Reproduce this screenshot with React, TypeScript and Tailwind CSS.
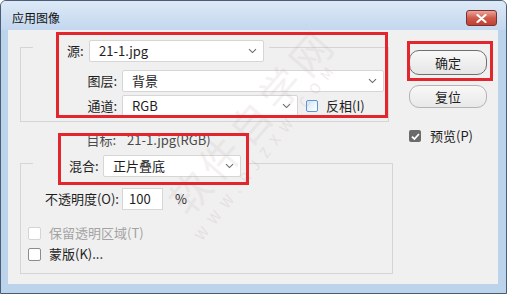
const font = "font-['Microsoft_YaHei','Noto_Sans_CJK_SC',sans-serif]";

function Chevron() {
  return (
    <svg width="9" height="6" viewBox="0 0 9 6" className="shrink-0">
      <path d="M1 1.2 L4.5 4.6 L8 1.2" fill="none" stroke="#6a6a6a" strokeWidth="1.1" />
    </svg>
  );
}

function Select({ value, w }: { value: string; w: string }) {
  return (
    <div
      className={`${w} h-[22px] flex items-center justify-between bg-white border border-[#d6d6d6] rounded-[2px] pl-[9px] pr-[6px] text-[13px] text-[#1e1e1e]`}
    >
      <span>{value}</span>
      <Chevron />
    </div>
  );
}

function Box({ disabled }: { disabled?: boolean }) {
  return (
    <span
      className={`w-[13px] h-[13px] shrink-0 rounded-[2px] border bg-white ${
        disabled ? "border-[#d4d4d4]" : "border-[#8c8c8c]"
      }`}
    />
  );
}

export default function App() {
  return (
    <div
      className={`relative w-[507px] h-[294px] overflow-hidden flex flex-col bg-[#bcd3ec] border border-[#4a5d74] rounded-t-[6px] ${font}`}
    >
      {/* title bar */}
      <div className="h-[29px] shrink-0 flex items-center justify-between pt-[5px] pl-[11px] pr-[9px] bg-linear-to-b from-[#dde9f6] to-[#c3d7ee]">
        <span className="text-[12px] leading-[14px] text-[#111]">应用图像</span>
        <button className="w-[31px] h-[16px] flex items-center justify-center rounded-[3px] border border-[#7a3030] bg-linear-to-b from-[#e9a59a] via-[#cf5a4d] to-[#c0402f]">
          <svg width="11" height="9" viewBox="0 0 11 9">
            <path d="M1.5 1 L9.5 8 M9.5 1 L1.5 8" stroke="#fff" strokeWidth="2.2" strokeLinecap="round" />
          </svg>
        </button>
      </div>

      {/* client */}
      <div className="flex-1 ml-[7px] mr-[8px] mb-[9px] bg-[#f0f0f0] flex text-[13px] leading-[18px] text-[#1e1e1e]">
        <div className="pl-[12px] pt-[2px]">
          <fieldset className="w-[369px] border border-[#d5d5d5] pb-[4px]">
            <legend className="ml-[12px] pl-[34px] pr-[5px] pt-[8px]">
              <div className="flex items-center">
                <span className="w-[18px]">源:</span>
                <span className="ml-[4px]">
                  <Select value="21-1.jpg" w="w-[175px]" />
                </span>
              </div>
            </legend>
            <div className="pt-[8px] flex flex-col gap-[3px]">
              <div className="flex items-center">
                <span className="w-[96px] text-right">图层:</span>
                <span className="ml-[5px]">
                  <Select value="背景" w="w-[262px]" />
                </span>
              </div>
              <div className="flex items-center">
                <span className="w-[96px] text-right">通道:</span>
                <span className="ml-[5px]">
                  <Select value="RGB" w="w-[176px]" />
                </span>
                <span className="ml-[8px] w-[12px] h-[12px] rounded-[2px] border border-[#5f94d4] bg-linear-to-br from-[#d6e6f8] to-white" />
                <span className="ml-[8px]">反相(I)</span>
              </div>
            </div>
          </fieldset>

          <div className="mt-[9px] h-[18px] flex items-center text-[#4a4a4a]">
            <span className="w-[96px] text-right">目标:</span>
            <span className="ml-[11px]">21-1.jpg(RGB)</span>
          </div>

          <fieldset className="w-[373px] border border-[#d5d5d5] pb-[10px]">
            <legend className="ml-[12px] pl-[36px] pr-[5px] pt-[6px]">
              <div className="flex items-center">
                <span className="w-[31px]">混合:</span>
                <span className="ml-[3px]">
                  <Select value="正片叠底" w="w-[138px]" />
                </span>
              </div>
            </legend>
            <div className="pt-[11px] flex items-center">
              <span className="w-[98px] text-right">不透明度(O):</span>
              <div className="ml-[3px] w-[41px] h-[22px] bg-white border border-[#d6d6d6] pl-[6px] flex items-center">
                100
              </div>
              <span className="ml-[12px]">%</span>
            </div>
            <div className="mt-[14px] h-[18px] flex items-center pl-[7px] text-[#a3a3a3]">
              <Box disabled />
              <span className="ml-[8px]">保留透明区域(T)</span>
            </div>
            <div className="mt-[3px] h-[18px] flex items-center pl-[7px]">
              <Box />
              <span className="ml-[8px]">蒙版(K)...</span>
            </div>
          </fieldset>
        </div>

        {/* buttons */}
        <div className="ml-[16px] pt-[20px] flex flex-col">
          <button className="w-[78px] h-[25px] rounded-[10px] border border-[#6f6f6f] bg-linear-to-b from-[#f8f8f8] to-[#e6e6e6] text-[13px]">
            确定
          </button>
          <button className="mt-[10px] w-[78px] h-[23px] rounded-[10px] border border-[#b4b4b4] bg-linear-to-b from-[#f8f8f8] to-[#e8e8e8] text-[13px]">
            复位
          </button>
          <div className="mt-[19px] h-[18px] flex items-center">
            <span className="w-[12px] h-[12px] rounded-[2px] bg-[#6b6b6b] flex items-center justify-center">
              <svg width="9" height="7" viewBox="0 0 9 7">
                <path d="M1 3.6 L3.4 6 L8 1" fill="none" stroke="#fff" strokeWidth="1.8" />
              </svg>
            </span>
            <span className="ml-[9px]">预览(P)</span>
          </div>
        </div>
      </div>

      {/* watermark */}
      <div className="absolute left-[137px] top-[99px] w-[226px] h-[40px] flex items-center justify-center -rotate-[49deg] text-[40px] leading-[40px] tracking-[6px] text-[#b8a4a4] opacity-[0.14] whitespace-nowrap pointer-events-none">
        软件自学网
      </div>
      <div className="absolute left-[144px] top-[139px] w-[242px] h-[20px] flex items-center justify-center -rotate-[52deg] text-[14px] tracking-[8px] text-[#b8a4a4] opacity-[0.2] whitespace-nowrap pointer-events-none">
        WWW.RJZXW.COM
      </div>

      {/* red annotation boxes */}
      <div className="absolute left-[55px] top-[31px] w-[332px] h-[86px] border-[3px] border-[#e3262e] pointer-events-none" />
      <div className="absolute left-[406px] top-[40px] w-[86px] h-[40px] border-[3px] border-[#e3262e] pointer-events-none" />
      <div className="absolute left-[57px] top-[132px] w-[191px] h-[52px] border-[3px] border-[#e3262e] pointer-events-none" />
    </div>
  );
}
